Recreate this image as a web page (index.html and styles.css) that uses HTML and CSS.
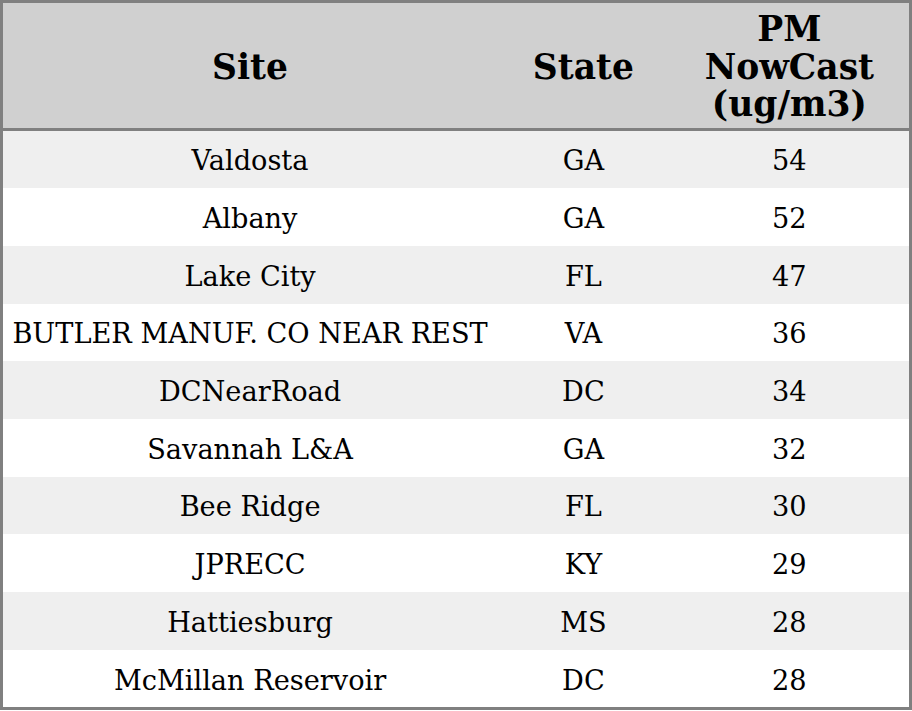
FILE: index.html
```html
<!DOCTYPE html>
<html>
<head>
<meta charset="utf-8">
<link rel="stylesheet" href="styles.css">
</head>
<body>
<table class="aq">
  <colgroup>
    <col class="c-site">
    <col class="c-state">
    <col class="c-pm">
  </colgroup>
  <thead>
    <tr><th>Site</th><th>State</th><th class="pm">PM<br>NowCast<br>(ug/m3)</th></tr>
  </thead>
  <tbody>
    <tr><td>Valdosta</td><td>GA</td><td>54</td></tr>
    <tr><td>Albany</td><td>GA</td><td>52</td></tr>
    <tr><td>Lake City</td><td>FL</td><td>47</td></tr>
    <tr><td>BUTLER MANUF. CO NEAR REST</td><td>VA</td><td>36</td></tr>
    <tr><td>DCNearRoad</td><td>DC</td><td>34</td></tr>
    <tr><td>Savannah L&amp;A</td><td>GA</td><td>32</td></tr>
    <tr><td>Bee Ridge</td><td>FL</td><td>30</td></tr>
    <tr><td>JPRECC</td><td>KY</td><td>29</td></tr>
    <tr><td>Hattiesburg</td><td>MS</td><td>28</td></tr>
    <tr><td>McMillan Reservoir</td><td>DC</td><td>28</td></tr>
  </tbody>
</table>
</body>
</html>
```
FILE: styles.css
```css
html, body { margin: 0; padding: 0; background: #fff; }
.aq {
  width: 912px;
  table-layout: fixed;
  border-collapse: collapse;
  border: 3px solid #808080;
  font-family: "DejaVu Serif", serif;
  color: #000;
}
.c-site { width: 494px; }
.c-state { width: 172px; }
.c-pm { width: 240px; }
.aq th {
  background: #d0d0d0;
  font-size: 34.5px;
  line-height: 37.5px;
  font-weight: bold;
  padding: 8px 0 4px;
  height: 112px;
  border-bottom: 3px solid #808080;
  text-align: center;
}
.aq td {
  font-size: 27.2px;
  text-align: center;
  padding: 3px 0 0;
  height: 54.7px;
  white-space: nowrap;
}
.aq tbody tr:nth-child(odd) td { background: #efefef; }
```
